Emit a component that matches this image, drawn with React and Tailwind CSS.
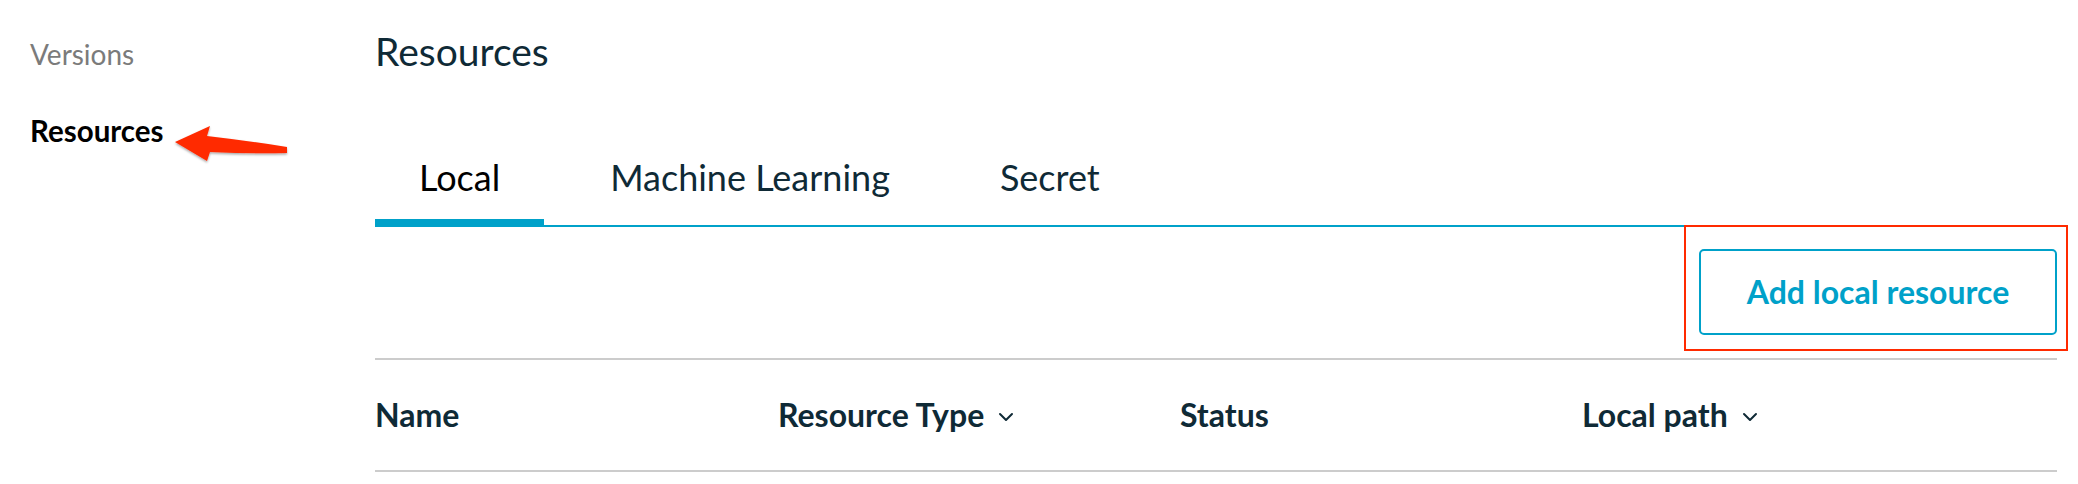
import { ChevronDown } from "lucide-react";

const tabs = ["Local", "Machine Learning", "Secret"];

const columns = [
  { label: "Name" },
  { label: "Resource Type", sort: true },
  { label: "Status" },
  { label: "Local path", sort: true },
];

function Arrow() {
  return (
    <svg
      className="absolute left-[160px] top-[110px]"
      width="140"
      height="60"
      viewBox="0 0 140 60"
    >
      <defs>
        <filter id="shadow" x="-20%" y="-20%" width="140%" height="160%">
          <feDropShadow dx="0" dy="1.5" stdDeviation="1.2" floodColor="#000" floodOpacity="0.35" />
        </filter>
      </defs>
      <path
        d="M15 32 L50 16 L47 26 Q90 31 127 37 L127 43 Q90 44 50 42 L47 51 Z"
        fill="#ff2a00"
        filter="url(#shadow)"
      />
    </svg>
  );
}

export default function App() {
  return (
    <div className="relative flex w-[2078px] h-[484px] overflow-hidden bg-white font-['Lato',sans-serif]">
      <aside className="w-[375px] shrink-0 pl-[30px] pt-[37px]">
        <p className="text-[28px] leading-[34px] text-[#7b7b7b]">Versions</p>
        <p className="mt-[43px] text-[29.5px] leading-[34px] font-bold text-black">Resources</p>
      </aside>

      <main className="w-[1682px] pt-[27px]">
        <h1 className="text-[39px] leading-[48px] text-[#0f2a36]">Resources</h1>

        <div className="mt-[82px] flex gap-[22px] border-b-2 border-[#00a1c9]">
          {tabs.map((t, i) => (
            <div
              key={t}
              className={`px-[44px] pb-[22px] text-[36px] leading-[40px] border-b-[6px] ${
                i === 0 ? "border-[#00a1c9] text-black" : "border-transparent text-[#0f2a36]"
              }`}
            >
              {t}
            </div>
          ))}
        </div>

        <div className="flex justify-end mt-[22px]">
          <div className="relative">
            <button className="w-[358px] h-[86px] rounded-[5px] border-2 border-[#00a1c9] bg-white text-[32px] font-bold text-[#00a1c9]">
              Add local resource
            </button>
            <div className="absolute -left-[15px] -right-[11px] -top-[24px] -bottom-[16px] border-2 border-[#ff2a00]" />
          </div>
        </div>

        <div className="mt-[23px] grid grid-cols-[403px_402px_402px_1fr] items-center h-[114px] border-y-2 border-[#cccccc]">
          {columns.map(c => (
            <div key={c.label} className="flex items-center gap-[10px] text-[32px] leading-[40px] font-bold text-[#0f2a36]">
              {c.label}
              {c.sort && <ChevronDown size={24} strokeWidth={2} className="mt-[4px]" />}
            </div>
          ))}
        </div>
      </main>

      <Arrow />
    </div>
  );
}
